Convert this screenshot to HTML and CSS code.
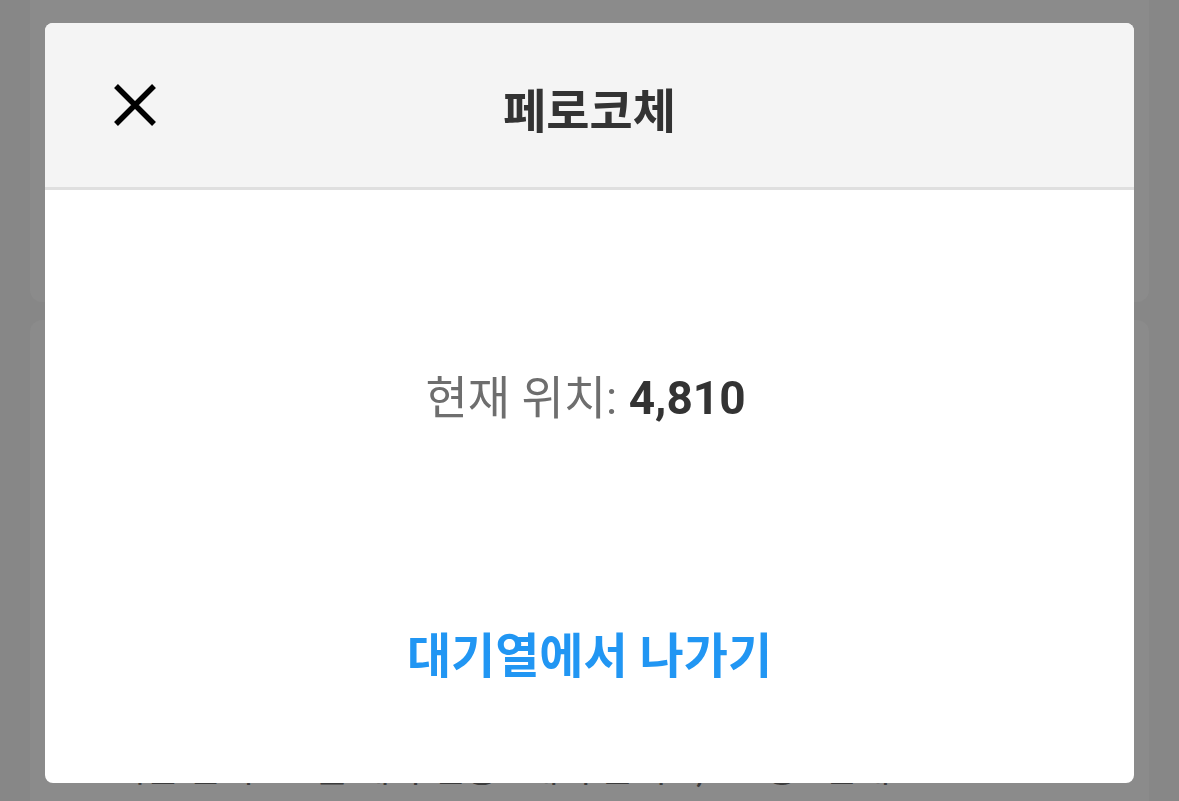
FILE: index.html
```html
<!doctype html>
<html lang="ko">
<head>
    <meta charset="UTF-8">
    <meta name="viewport" content="width=device-width, initial-scale=1.0">
    <title>페로코체</title>
    <link rel="stylesheet" href="styles.css">
</head>
<body>

<div class="page">
    <div class="card card-top"></div>
    <div class="card card-bottom">
        <p class="card-text">포시즌 관리 · 오늘 예약 현황 · 대기 순서 9,999명 · 안내</p>
    </div>
</div>

<div class="modal">
    <div class="modal-header">
        <button class="close-btn" aria-label="닫기">
            <svg width="42" height="42" viewBox="0 0 42 42">
                <path d="M2 2 L40 40 M40 2 L2 40" stroke="#000" stroke-width="5.5" fill="none"/>
            </svg>
        </button>
        <h1 class="modal-title">페로코체</h1>
        <div></div>
    </div>
    <div class="modal-body">
        <div class="position">현재 위치: <b>4,810</b></div>
        <button class="leave-btn">대기열에서 나가기</button>
    </div>
</div>

</body>
</html>
```

FILE: styles.css
```css
html, body {
    margin: 0;
    height: 100%;
}

body {
    background: #878787;
    font-family: "Roboto", "Noto Sans CJK KR", sans-serif;
    overflow: hidden;
}

.page {
    padding: 0 30px;
    display: flex;
    flex-direction: column;
    gap: 18px;
}

.card {
    background: #8b8b8b;
    border-radius: 12px;
}

.card-top {
    margin-top: -20px;
    height: 322px;
}

.card-bottom {
    height: 481px;
    padding: 0 50px;
    border-radius: 12px 12px 0 0;
    overflow: hidden;
}

.card-text {
    margin: 430px 0 0;
    font-size: 36px;
    line-height: 40px;
    color: #3c3c3c;
    white-space: nowrap;
}

.modal {
    position: fixed;
    left: 45px;
    top: 23px;
    width: 1089px;
    height: 760px;
    background: #fff;
    border-radius: 8px;
    overflow: hidden;
    display: flex;
    flex-direction: column;
}

.modal-header {
    height: 164px;
    background: #f4f4f4;
    border-bottom: 3px solid #dfdfdf;
    display: grid;
    grid-template-columns: 1fr auto 1fr;
    align-items: center;
}

.close-btn {
    justify-self: start;
    margin-left: 69px;
    padding: 0;
    background: transparent;
    border: none;
    display: flex;
    cursor: pointer;
}

.modal-title {
    margin: 0;
    font-size: 47px;
    font-weight: 700;
    color: #333;
    line-height: 60px;
    padding-top: 14px;
}

.modal-body {
    flex: 1;
    display: flex;
    flex-direction: column;
    align-items: center;
    padding-top: 178px;
}

.position {
    font-size: 46px;
    line-height: 60px;
    color: #6e6e6e;
    margin-left: -8px;
}

.position b {
    color: #333;
    font-weight: 700;
}

.leave-btn {
    margin-top: 199px;
    padding: 0;
    background: transparent;
    border: none;
    font-family: inherit;
    font-size: 48px;
    line-height: 60px;
    font-weight: 700;
    color: #2196f3;
    cursor: pointer;
}
```
